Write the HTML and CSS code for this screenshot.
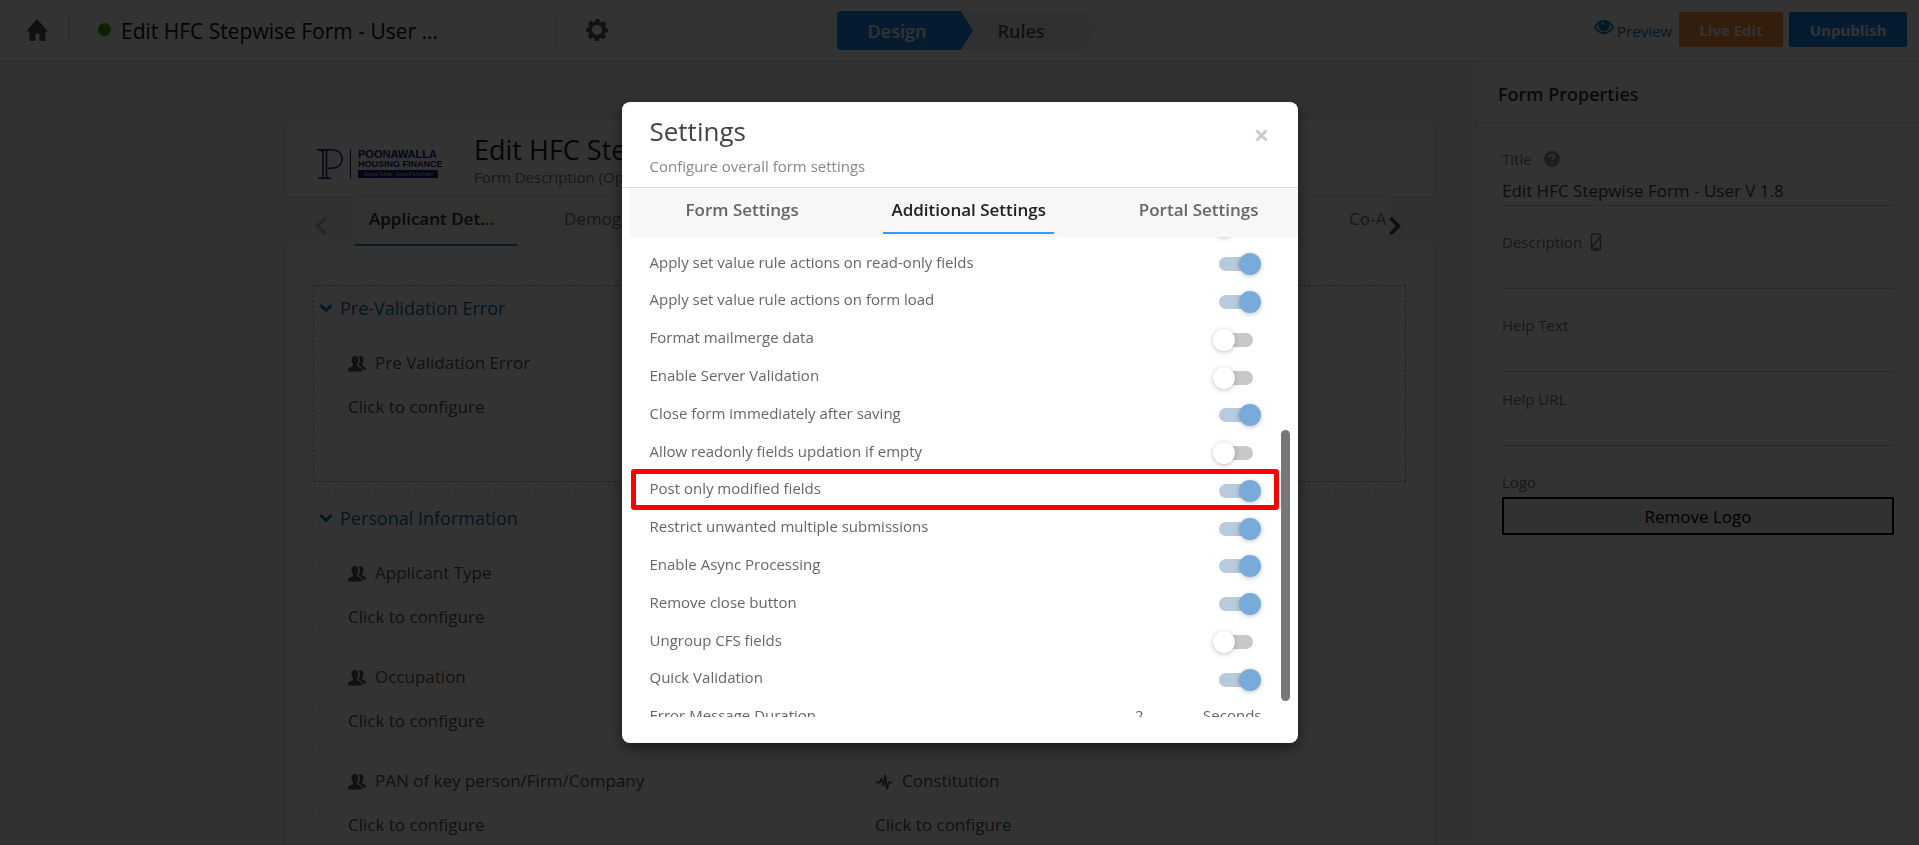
FILE: index.html
```html
<!DOCTYPE html>
<html lang="en">
<head>
<meta charset="utf-8">
<title>Form Designer</title>
<link rel="stylesheet" href="styles.css">
</head>
<body>
<svg class="defs" aria-hidden="true">
  <symbol id="users" viewBox="0 0 18 16"><path d="M7 0c2.400 0 3.600 1.700 3.400 4.200C10.200 6.500 9.300 7.700 8.900 8.600c0 1.200.4 1.700 2 2.400 1.800.8 2.900 1.300 2.900 4.400H0c0-3 1.200-3.600 3-4.400 1.600-.7 2-1.200 2-2.400C4.600 7.700 3.700 6.500 3.500 4.200 3.300 1.700 4.500 0 7 0z"/><path d="M10.800.4c3.200-1 4.900.8 4.600 3.700-.2 2-1 3-1.300 3.800 0 1.500.5 1.800 1.900 2.500 1.500.7 2 1.400 2 3.400h-3.300c-.4-2-1.500-3-3.200-3.700-.8-.4-1.100-.7-1.100-1.100.5-.9 1.400-2.400 1.500-4.500.1-1.700-.3-3.100-1.100-4.100z"/></symbol>
  <symbol id="down" viewBox="0 0 14 10"><path d="M1.500 2 7 7.500 12.500 2" fill="none" stroke="currentColor" stroke-width="3"/></symbol>
</svg>

<div class="app">
  <header class="topbar">
    <div class="top-left">
      <a class="home" href="#" aria-label="Home"><svg width="22" height="22" viewBox="0 0 22 22"><path d="M11 0 22 12.500h-2.500V22h-6v-7.500h-4V22h-6v-9.500H0z"/></svg></a>
      <span class="rule"></span>
      <span class="dot"></span>
      <span class="form-name">Edit HFC Stepwise Form - User ...</span>
      <span class="rule"></span>
      <button class="icon-btn" aria-label="Form settings"><svg width="22" height="22" viewBox="0 0 22 22"><circle cx="11" cy="11" r="7" fill="none" stroke="currentColor" stroke-width="4"/><circle cx="11" cy="11" r="9" fill="none" stroke="currentColor" stroke-width="4" stroke-dasharray="4 3.070" stroke-dashoffset="2"/></svg></button>
    </div>
    <nav class="steps">
      <a class="step step-on" href="#">Design</a>
      <a class="step" href="#">Rules</a>
    </nav>
    <div class="top-right">
      <a class="preview" href="#"><svg width="20" height="14" viewBox="0 0 20 14"><path fill-rule="evenodd" d="M0 7C2.500 2.500 6 0 10 0s7.500 2.500 10 7c-2.500 4.500-6 7-10 7S2.500 11.500 0 7zm2 0c2 3.400 4.700 5.300 8 5.300S16 10.400 18 7c-1-1.800-2.300-3.200-3.700-4.100A5.300 5.300 0 1 1 5.700 2.900C4.300 3.800 3 5.200 2 7zm5.200-2A2.800 2.800 0 0 1 10 2.200v1.200A1.700 1.700 0 0 0 8.300 5z"/></svg><span>Preview</span></a>
      <button class="btn btn-live">Live Edit</button>
      <button class="btn btn-publish">Unpublish</button>
    </div>
  </header>

  <div class="work">
    <main class="canvas">
      <div class="card">
        <div class="card-head">
          <div class="logo">
            <svg width="26" height="30" viewBox="0 0 26 30"><path d="M0 .7h13.500C21 .7 25 4.500 25 10s-4 9.300-11 9.300h-3M6 1v28M9.500 1v28M1 29.300h13M3 1c2 .5 3 1.500 3 3" fill="none" stroke="currentColor" stroke-width="1.500"/></svg>
            <span class="logo-bar"></span>
            <div class="logo-text"><b>POONAWALLA</b><b class="logo-sub">HOUSING FINANCE</b><span>Apna Ghar, Apni Pehchan</span></div>
          </div>
          <div><h1 class="card-title">Edit HFC Stepwise Form</h1><p class="card-desc">Form Description (Optional)</p></div>
        </div>
        <div class="tabs">
          <button class="tab-arrow tab-prev" aria-label="Previous"><svg width="12" height="20" viewBox="0 0 12 20"><path d="M10.500 2 2.500 10l8 8" fill="none" stroke="currentColor" stroke-width="3.500"/></svg></button>
          <a class="tab tab-on" href="#">Applicant Det...</a>
          <a class="tab" href="#">Demographic</a>
          <a class="tab tab-last" href="#">Co-A</a>
          <button class="tab-arrow tab-next" aria-label="Next"><svg width="12" height="20" viewBox="0 0 12 20"><path d="m1.500 2 8 8-8 8" fill="none" stroke="currentColor" stroke-width="3.500"/></svg></button>
        </div>
        <div class="sections">
          <section class="section section-on">
            <h2 class="section-title"><svg width="14" height="10"><use href="#down"/></svg>Pre-Validation Error</h2>
            <div class="fields">
              <div class="field"><h3><svg width="18" height="16"><use href="#users"/></svg>Pre Validation Error</h3><p>Click to configure</p></div>
            </div>
          </section>
          <section class="section">
            <h2 class="section-title"><svg width="14" height="10"><use href="#down"/></svg>Personal Information</h2>
            <div class="fields">
              <div class="field"><h3><svg width="18" height="16"><use href="#users"/></svg>Applicant Type</h3><p>Click to configure</p></div>
              <div class="field field-first"><h3><svg width="18" height="16"><use href="#users"/></svg>Occupation</h3><p>Click to configure</p></div>
              <div class="field field-first"><h3><svg width="18" height="16"><use href="#users"/></svg>PAN of key person/Firm/Company</h3><p>Click to configure</p></div>
              <div class="field"><h3><svg width="18" height="16" viewBox="0 0 18 16"><path d="M1 8.500h3.500L6.500 5l2 7 1.700-11 1.800 14 1.800-6.500H17" fill="none" stroke="currentColor" stroke-width="1.800"/></svg>Constitution</h3><p>Click to configure</p></div>
            </div>
          </section>
        </div>
      </div>
    </main>

    <aside class="props">
      <h2 class="props-head">Form Properties</h2>
      <div class="props-body">
        <div class="prop"><label for="p-title">Title <svg class="help" width="16" height="16" viewBox="0 0 16 16"><circle cx="8" cy="8" r="8"/><path d="M5.600 6.200C5.600 4.700 6.600 4 8 4s2.400.8 2.400 2c0 1.600-2.200 1.700-2.200 3.200M8.200 10.700v1.700" fill="none" stroke="#fff" stroke-width="1.700"/></svg></label><input id="p-title" type="text" value="Edit HFC Stepwise Form - User V 1.8"></div>
        <div class="prop"><label for="p-desc">Description <svg class="no-phone" width="12" height="18" viewBox="0 0 12 18"><rect x="1.500" y="1" width="9" height="16" rx="1.500" fill="none" stroke="currentColor" stroke-width="1.600"/><path d="M1 15 11 3M3 15.500h6" stroke="currentColor" stroke-width="1.500"/></svg></label><input id="p-desc" type="text"></div>
        <div class="prop"><label for="p-help">Help Text</label><input id="p-help" type="text"></div>
        <div class="prop prop-tight"><label for="p-url">Help URL</label><input id="p-url" type="text"></div>
        <div class="prop"><span class="prop-label">Logo</span><button class="remove">Remove Logo</button></div>
      </div>
    </aside>
  </div>
</div>

<div class="overlay">
  <div class="modal" role="dialog" aria-modal="true" aria-labelledby="modal-title">
    <div class="modal-head">
      <div><h2 id="modal-title">Settings</h2><p>Configure overall form settings</p></div>
      <button class="close" aria-label="Close"><svg width="13" height="13" viewBox="0 0 13 13"><path d="m1.500 1.500 10 10m0-10-10 10" stroke="currentColor" stroke-width="3"/></svg></button>
    </div>
    <nav class="modal-tabs">
      <a href="#">Form Settings</a>
      <a class="on" href="#">Additional Settings</a>
      <a href="#">Portal Settings</a>
    </nav>
    <div class="modal-body">
      <div class="scroll">
        <div class="list">
          <label class="row"><span></span><input type="checkbox" aria-label="Previous setting"></label>
          <label class="row"><span>Apply set value rule actions on read-only fields</span><input type="checkbox" checked></label>
          <label class="row"><span>Apply set value rule actions on form load</span><input type="checkbox" checked></label>
          <label class="row"><span>Format mailmerge data</span><input type="checkbox"></label>
          <label class="row"><span>Enable Server Validation</span><input type="checkbox"></label>
          <label class="row"><span>Close form immediately after saving</span><input type="checkbox" checked></label>
          <label class="row"><span>Allow readonly fields updation if empty</span><input type="checkbox"></label>
          <label class="row row-marked"><span>Post only modified fields</span><input type="checkbox" checked></label>
          <label class="row"><span>Restrict unwanted multiple submissions</span><input type="checkbox" checked></label>
          <label class="row"><span>Enable Async Processing</span><input type="checkbox" checked></label>
          <label class="row"><span>Remove close button</span><input type="checkbox" checked></label>
          <label class="row"><span>Ungroup CFS fields</span><input type="checkbox"></label>
          <label class="row"><span>Quick Validation</span><input type="checkbox" checked></label>
          <div class="row"><label for="duration">Error Message Duration</label><span class="duration"><input id="duration" type="text" value="2"><span>Seconds</span></span></div>
        </div>
      </div>
      <span class="thumb"></span>
    </div>
  </div>
</div>
</body>
</html>
```

FILE: styles.css
```css
* { box-sizing: border-box; }
body { margin: 0; font-family: "Open Sans", "Noto Sans", sans-serif; font-size: 15px; color: #333; overflow: hidden; }
h1, h2, h3, p { margin: 0; font-weight: 400; }
a { color: inherit; text-decoration: none; }
button, input { font: inherit; color: inherit; }
button { border: 0; background: none; padding: 0; }
svg { fill: currentColor; flex: none; }
.defs { position: absolute; width: 0; height: 0; }

.app { height: 100vh; display: flex; flex-direction: column; background: #fff; border-bottom: 1px solid #f5e0ec; overflow: hidden; }

.topbar { flex: none; display: grid; grid-template-columns: 1fr auto 1fr; height: 62px; border-bottom: 1px solid #dcdcdc; }
.top-left { display: flex; align-items: center; padding: 0 0 2px 26px; color: #555; }
.home, .icon-btn { display: flex; }
.rule { width: 1px; height: 32px; background: #d4d4d4; margin: 0 28px 0 21px; }
.dot { width: 13px; height: 13px; border-radius: 50%; background: #3fa020; margin-right: 10px; }
.form-name { width: 414px; font-size: 21px; line-height: 30px; padding-top: 3px; color: #111; }
.top-left .form-name + .rule { margin-right: 29px; }
.steps { display: flex; padding: 11px 0; margin-left: 14px; }
.step { display: flex; justify-content: center; align-items: center; width: 136px; margin-left: -13px; padding-right: 14px; color: #555; background: #e8f3f1; font-size: 18px; font-weight: 600; clip-path: polygon(0 0, 91% 0, 100% 50%, 91% 100%, 0 100%); }
.step-on { z-index: 1; margin: 0; padding: 0 16px 0 0; color: #fff; background: #1c8ef0; border-radius: 4px 0 0 4px; }
.top-right { display: flex; justify-content: flex-end; align-items: flex-start; padding: 12px 12px 0 0; }
.preview { display: flex; gap: 3px; color: #0878b8; line-height: 22px; padding-top: 8px; margin-right: 7px; }
.btn { height: 35px; font-weight: 700; color: #fff; border-radius: 2px; }
.btn-live { width: 104px; background: #ff8f3f; margin-right: 6px; }
.btn-publish { width: 118px; background: #1c8ef0; border: 1px solid #0a74cc; }

.work { flex: 1; min-height: 0; display: grid; grid-template-columns: 1fr 442px; }
.canvas { background: #f6f6f6; padding: 57px 44px 0 287px; }
.card { background: #fff; border-radius: 8px; height: 900px; box-shadow: 0 0 20px #e4e4e4; }
.card-head { display: grid; grid-template-columns: 157px 1fr; height: 78px; padding: 12px 0 0 30px; border-bottom: 1px solid #ddd; }
.logo { display: flex; gap: 7px; padding-top: 18px; color: #14246a; }
.logo-bar { width: 1px; height: 30px; background: #14246a; }
.logo-text { display: flex; flex-direction: column; font: 8px/9px "Liberation Sans", sans-serif; white-space: nowrap; }
.logo-text b { font-size: 11px; line-height: 10px; }
.logo-text .logo-sub { font-size: 9px; line-height: 11px; }
.logo-text span { width: 80px; font-size: 6px; line-height: 8px; text-align: center; background: #14246a; color: #ddd; }
.card-title { font-size: 27px; line-height: 38px; color: #222; }
.card-desc { line-height: 16px; color: #777; }
.tabs { display: flex; height: 49px; background: #f7f7f5; font-size: 17px; color: #777; overflow: hidden; }
.tab-arrow { flex: none; display: flex; align-items: center; background: #f7f6ec; padding-top: 8px; }
.tab-prev { width: 68px; padding-left: 28px; color: #bbb; }
.tab-next { width: 46px; padding-left: 2px; color: #444; }
.tab { flex: none; width: 162px; padding: 9px 14px 0; line-height: 26px; }
.tab-on { color: #333; font-weight: 600; border-bottom: 2px solid #1c7fd6; margin-right: 33px; }
.tab-last { margin-left: auto; width: 38px; padding: 9px 0 0; overflow: hidden; }
.sections { padding: 39px 27px 0 26px; display: grid; gap: 13px; }
.section { border: 1px dashed #ddd; padding: 8px 5px 28px; }
.section-on { border-color: #5fb0f0; height: 197px; }
.section-title { display: flex; align-items: center; gap: 7px; font-size: 18px; line-height: 28px; color: #0a6fa8; }
.fields { display: grid; grid-template-columns: 527px 1fr; row-gap: 36px; padding: 29px 0 0 29px; }
.field-first { grid-column: 1; }
.field { font-size: 17px; line-height: 24px; color: #555; }
.field h3 { display: flex; align-items: center; gap: 9px; font-size: 17px; }
.field h3 svg { margin-top: 2px; }
.field p { padding-top: 20px; }

.props { background: #fff; border-left: 1px solid #e2e2e2; }
.props-head { height: 61px; border-bottom: 1px solid #ddd; padding: 18px 20px 0; font-size: 18px; line-height: 28px; font-weight: 600; color: #333; }
.props-body { padding: 0 25px 0 24px; }
.prop { padding-top: 26px; color: #777; }
.prop label, .prop-label { display: flex; align-items: center; gap: 10px; height: 20px; }
.help { margin-left: 2px; color: #8a929a; }
.prop .no-phone { margin-left: -2px; }
.prop input { display: block; width: 100%; height: 37px; border: 0; border-bottom: 1px solid #c4c4c4; background: none; padding: 7px 0 0; font-size: 17px; color: #444; }
.prop-tight { padding-top: 17px; }
.remove { width: 100%; height: 38px; margin-top: 5px; border: 2px solid #000; background: #f4f4f4; color: #000; font-size: 17px; }

.overlay { position: fixed; z-index: 10; inset: 0; display: flex; justify-content: center; align-items: flex-start; padding: 102px 0; background: rgba(0, 0, 0, .8); }
.modal { width: 676px; padding-bottom: 26px; background: #fff; border-radius: 8px; box-shadow: 0 5px 15px rgba(0, 0, 0, .5); }
.modal-head { display: flex; justify-content: space-between; padding: 12px 30px 9px 28px; border-bottom: 1px solid #dcdcdc; }
.modal-head h2 { font-size: 26px; line-height: 34px; color: #444; }
.modal-head p { padding-top: 6px; line-height: 24px; color: #888; }
.close { align-self: flex-start; padding-top: 12px; color: #ccc; }
.modal-tabs { display: flex; justify-content: space-between; height: 49px; margin-left: 8px; padding: 0 31px 0 48px; background: #f8f7f5; font-size: 17px; font-weight: 600; color: #666; }
.modal-tabs a { height: 46px; padding: 9px 8px 0; line-height: 26px; }
.modal-tabs .on { color: #222; border-bottom: 2px solid #2f9bff; }
.modal-body { position: relative; }
.scroll { height: 480px; overflow: hidden; padding: 0 36px 0 28px; }
.list { display: grid; grid-auto-rows: 1fr; height: 529px; margin-top: -32px; color: #666; }
.row { position: relative; display: flex; justify-content: space-between; align-items: center; }
.row input[type="checkbox"] { appearance: none; display: flex; align-items: center; width: 34px; height: 14px; margin: 5px 9px 0 0; border-radius: 7px; background: #c8c8c8; }
.row input[type="checkbox"]::before { content: ""; flex: none; width: 22px; height: 22px; margin-left: -6px; border-radius: 50%; background: #fff; box-shadow: 0 1px 5px rgba(0, 0, 0, .25); }
.row input[type="checkbox"]:checked { background: #b8cbdc; }
.row input[type="checkbox"]:checked::before { margin-left: 20px; background: #78abd9; }
.row-marked::after { content: ""; position: absolute; inset: 0 -17px -3px -19px; border: 5px solid #f00; border-radius: 3px; }
.duration { display: flex; }
.duration input { width: 68px; border: 0; padding: 0; background: none; }
.thumb { position: absolute; top: 193px; right: 8px; width: 9px; height: 271px; border-radius: 5px; background: #777; }
```
